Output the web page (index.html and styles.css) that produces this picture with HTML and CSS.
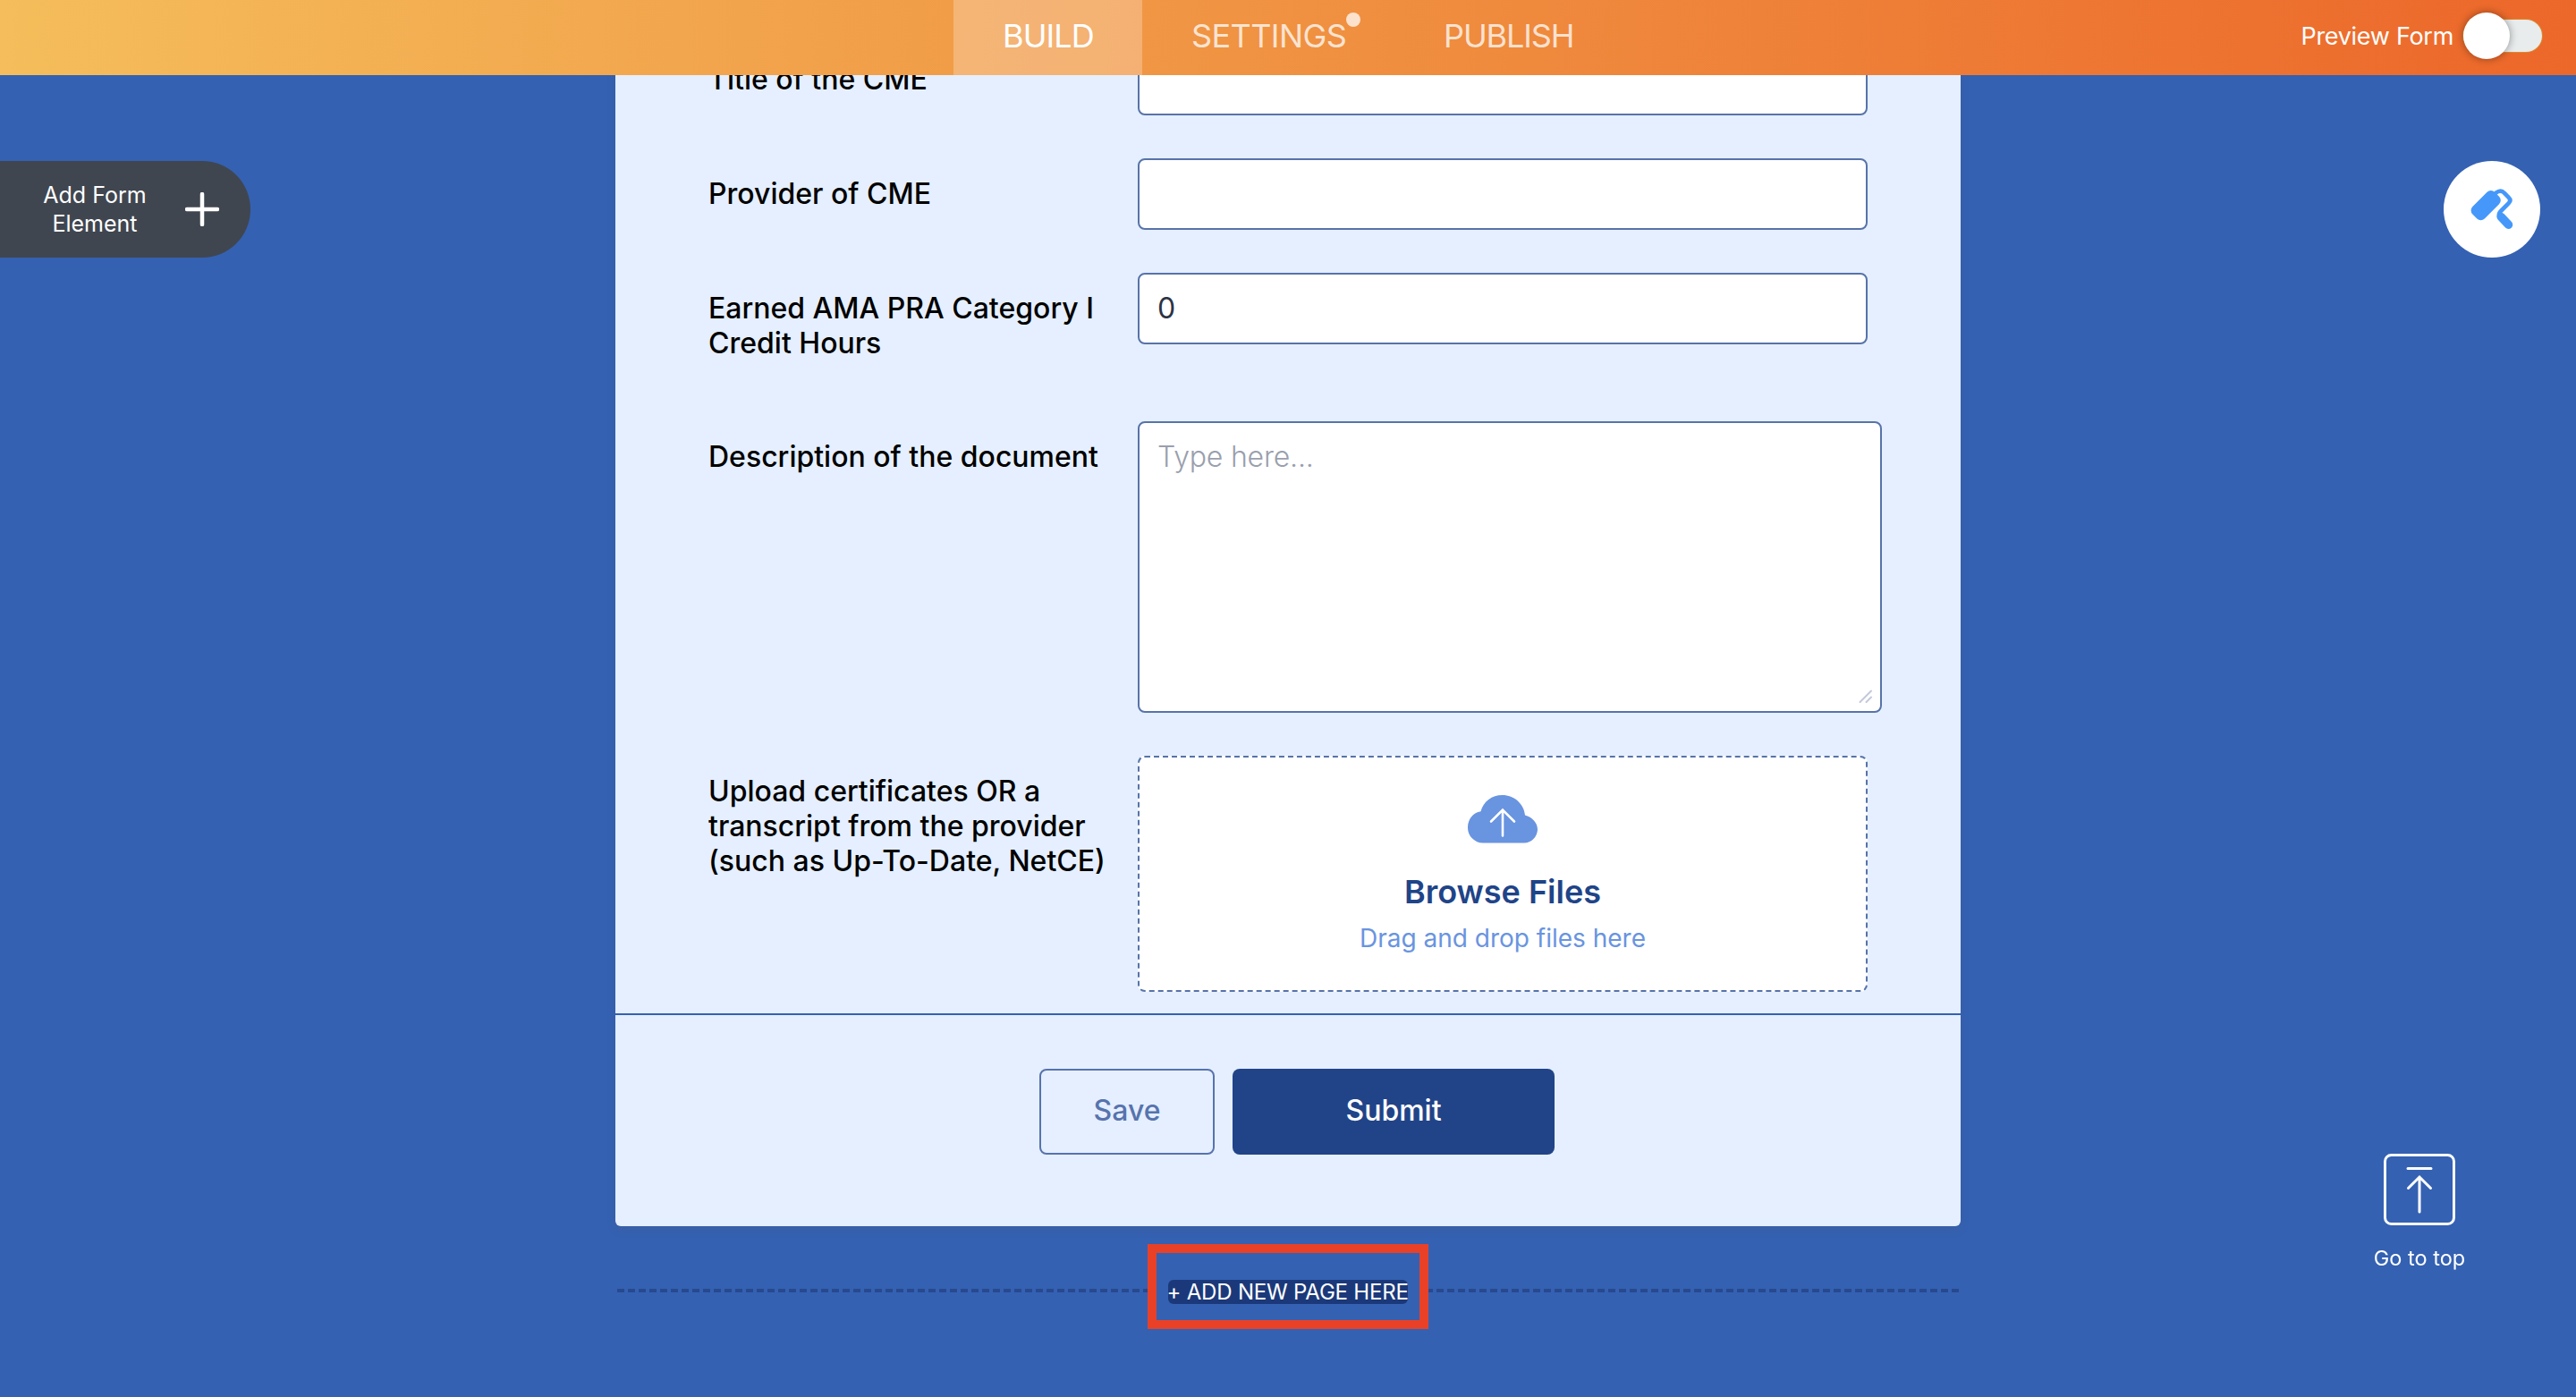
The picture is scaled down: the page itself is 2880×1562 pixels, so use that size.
FILE: index.html
```html
<!DOCTYPE html>
<html lang="en">
<head>
    <meta charset="UTF-8">
    <meta name="viewport" content="width=device-width, initial-scale=1.0">
    <title>Form Builder</title>
    <link rel="stylesheet" href="styles.css">
</head>
<body>
    <header class="topbar">
        <nav class="tabs">
            <a class="tab active"><span class="tab-text build">BUILD</span></a>
            <a class="tab"><span class="tab-text settings">SETTINGS<i class="dot"></i></span></a>
            <a class="tab"><span class="tab-text publish">PUBLISH</span></a>
        </nav>
        <div class="preview">
            <span class="preview-text">Preview Form</span>
            <span class="toggle"><span class="knob"></span></span>
        </div>
    </header>

    <button class="add-element">
        <span class="add-text">Add Form<br>Element</span>
        <svg class="plus" viewBox="0 0 38 38"><path d="M19 2v34M2 19h34"/></svg>
    </button>

    <button class="designer">
        <svg viewBox="0 0 108 108">
            <rect x="-17.5" y="-9.5" width="35" height="19" rx="6" transform="translate(47.2 49.6) rotate(-45)"/>
            <path class="arm" d="M58.5 35.6Q64 31.5 68 36L72.8 40.8Q76 44 72.8 47.2L64 56Q61.5 58.5 61.8 62"/>
            <path class="grip" d="M64.3 62.6L72.5 71.3"/>
        </svg>
    </button>

    <main class="builder">
        <form class="form-card">
            <div class="fields">
                <div class="row">
                    <label for="title">Title of the CME</label>
                    <input type="text" id="title">
                </div>
                <div class="row">
                    <label for="provider">Provider of CME</label>
                    <input type="text" id="provider">
                </div>
                <div class="row">
                    <label for="hours">Earned AMA PRA Category I Credit Hours</label>
                    <input type="text" id="hours" value="0">
                </div>
                <div class="row">
                    <label for="description">Description of the document</label>
                    <div class="textarea-wrap">
                        <textarea id="description" placeholder="Type here..."></textarea>
                        <svg class="grabber" viewBox="0 0 16 16"><path d="M1.5 14L14 1.5M8.5 14L14 8.5"/></svg>
                    </div>
                </div>
                <div class="row">
                    <label>Upload certificates OR a transcript from the provider (such as Up-To-Date, NetCE)</label>
                    <div class="upload">
                        <svg class="cloud" viewBox="0 0 78 54">
                            <path class="cloud-shape" d="M17 53.5A17 17 0 0 1 0 36C0 27 6 19.5 14.5 18.2C17.5 7 27 0 38.5 0C52 0 63 10 64 22.5C72 24.5 78 31 78 38.5A15.5 15.5 0 0 1 63 53.5Z"/>
                            <path class="cloud-arrow" d="M39 45.5V17M26 29.5L39 16.5L52 29.5"/>
                        </svg>
                        <span class="browse">Browse Files</span>
                        <span class="drag">Drag and drop files here</span>
                    </div>
                </div>
            </div>
            <div class="actions">
                <button type="button" class="btn save">Save</button>
                <button type="button" class="btn submit">Submit</button>
            </div>
        </form>

        <div class="new-page">
            <svg class="dashes" height="4"><line x1="0" y1="2" x2="100%" y2="2"/></svg>
            <div class="highlight"><span class="new-page-text">+ ADD NEW PAGE HERE</span></div>
            <svg class="dashes after" height="4"><line x1="0" y1="2" x2="100%" y2="2"/></svg>
        </div>
    </main>

    <a class="go-top">
        <svg viewBox="0 0 80 80">
            <rect x="1.5" y="1.5" width="77" height="77" rx="7"/>
            <path d="M27 16.5H53M40 65V26.5M27.5 38.5L40 26L52.5 38.5"/>
        </svg>
        <span>Go to top</span>
    </a>
</body>
</html>
```

FILE: styles.css
```css
* {
    box-sizing: border-box;
}
body {
    margin: 0;
    height: 1562px;
    overflow: hidden;
    background-color: #3461b2;
    font-family: Inter, "Liberation Sans", sans-serif;
}
button, input, textarea {
    font-family: inherit;
}
.topbar {
    position: fixed;
    top: 0;
    left: 0;
    right: 0;
    z-index: 10;
    height: 84px;
    display: flex;
    justify-content: space-between;
    padding: 0 38px 0 1066px;
    background: linear-gradient(90deg, #f5bd5b 0%, #f09543 46%, #ec672a 100%);
}
.tabs {
    display: flex;
}
.tab {
    display: flex;
    align-items: center;
    padding: 0 55px 5px;
    color: rgba(255, 255, 255, 0.75);
    font-size: 36px;
    line-height: 44px;
}
.tab.active {
    background-color: rgba(255, 255, 255, 0.25);
    color: #fff;
}
.tab-text {
    position: relative;
    white-space: nowrap;
}
.build {
    width: 101px;
    letter-spacing: -0.9px;
}
.settings {
    width: 172px;
    letter-spacing: -0.6px;
}
.publish {
    letter-spacing: -1.1px;
}
.dot {
    position: absolute;
    top: -4px;
    right: -17px;
    width: 16px;
    height: 16px;
    border-radius: 50%;
    background-color: #fce2cd;
}
.preview {
    display: flex;
    align-items: center;
    padding-bottom: 4px;
    gap: 11px;
    color: #fff;
    font-size: 27px;
    letter-spacing: -0.3px;
}
.toggle {
    position: relative;
    width: 88px;
    height: 36px;
    border-radius: 18px;
    background-color: #e8ecec;
    box-shadow: 0 0 0 1px #dc8a2e;
}
.knob {
    position: absolute;
    top: -8px;
    left: 0;
    width: 52px;
    height: 52px;
    border-radius: 50%;
    background-color: #fff;
    box-shadow: 0 0 10px rgba(0, 0, 0, 0.4);
}
.add-element {
    position: fixed;
    top: 180px;
    left: 0;
    width: 280px;
    height: 108px;
    display: flex;
    align-items: center;
    justify-content: space-between;
    padding: 0 35px 0 46px;
    border: none;
    border-radius: 0 54px 54px 0;
    background-color: #404650;
    color: #fff;
}
.add-text {
    width: 120px;
    font-size: 25px;
    line-height: 32px;
    white-space: nowrap;
}
.plus {
    width: 38px;
    height: 38px;
    fill: none;
    stroke: #fff;
    stroke-width: 4.5;
    stroke-linecap: round;
}
.designer {
    position: fixed;
    top: 180px;
    right: 40px;
    width: 108px;
    height: 108px;
    padding: 0;
    border: none;
    border-radius: 50%;
    background-color: #fff;
}
.designer svg {
    display: block;
    fill: #4598fa;
}
.designer path {
    fill: none;
    stroke: #4598fa;
    stroke-linecap: round;
}
.arm {
    stroke-width: 4.6;
}
.grip {
    stroke-width: 9.5;
}
.builder {
    width: 1504px;
    margin: 0 auto;
}
.form-card {
    height: 1371px;
    border-radius: 0 0 6px 6px;
    background-color: #e5efff;
    box-shadow: 0 4px 8px rgba(80, 90, 130, 0.3);
}
.fields {
    display: flex;
    flex-direction: column;
    gap: 48px;
    padding: 49px 88px 24px 104px;
    border-bottom: 2px solid #3461b2;
}
.row {
    display: flex;
    align-items: flex-start;
    gap: 24px;
}
.row label {
    width: 456px;
    padding: 20px 0;
    font-size: 32px;
    font-weight: 500;
    line-height: 39px;
    color: #000;
}
.row input {
    width: 816px;
    height: 80px;
    padding: 0 20px 1px;
    border: 2px solid #5773a9;
    border-radius: 8px;
    background-color: #fff;
    color: #2c3345;
    font-size: 32px;
    outline: none;
}
.textarea-wrap {
    position: relative;
    height: 326px;
}
.row textarea {
    display: block;
    width: 832px;
    height: 326px;
    padding: 18px 20px;
    border: 2px solid #5773a9;
    border-radius: 8px;
    color: #2c3345;
    font-size: 32px;
    line-height: 39px;
    resize: none;
    outline: none;
}
.row textarea::placeholder {
    color: #9a9fae;
    font-weight: 300;
    letter-spacing: -0.2px;
}
.grabber {
    position: absolute;
    right: 10px;
    bottom: 10px;
    width: 16px;
    height: 16px;
    fill: none;
    stroke: #c3c8da;
    stroke-width: 2;
    stroke-linecap: round;
}
.upload {
    width: 816px;
    height: 264px;
    display: flex;
    flex-direction: column;
    align-items: center;
    padding-top: 42px;
    border: 2px dashed #5773a9;
    border-radius: 8px;
    background-color: #fff;
}
.cloud {
    width: 78px;
    height: 54px;
}
.cloud-shape {
    fill: #6994e0;
}
.cloud-arrow {
    fill: none;
    stroke: #fff;
    stroke-width: 2.6;
    stroke-linecap: round;
}
.browse {
    margin-top: 32px;
    color: #1f4488;
    font-size: 36px;
    font-weight: 600;
    line-height: 44px;
}
.drag {
    margin-top: 13px;
    color: #6994e0;
    font-size: 28px;
    line-height: 34px;
}
.actions {
    display: flex;
    justify-content: center;
    gap: 20px;
    padding: 60px 0 0 20px;
}
.btn {
    height: 96px;
    padding: 0 0 3px;
    border-radius: 8px;
    font-size: 32px;
    font-weight: 500;
}
.save {
    width: 196px;
    border: 2px solid #5773ad;
    background-color: transparent;
    color: #5773ad;
}
.submit {
    width: 360px;
    border: none;
    background-color: #214488;
    color: #fff;
}
.new-page {
    display: flex;
    align-items: center;
    margin-top: 20px;
    padding: 0 2px;
}
.dashes {
    flex: 1;
    margin-top: 9px;
    width: 0;
}
.dashes line {
    stroke: #28498f;
    stroke-width: 4;
    stroke-dasharray: 8 4;
}
.dashes.after line {
    stroke-dashoffset: 3;
}
.highlight {
    width: 314px;
    height: 95px;
    display: flex;
    justify-content: center;
    border: 10px solid #e94127;
    padding-top: 30px;
}
.new-page-text {
    width: 268px;
    height: 27px;
    border-radius: 6px;
    background-color: #1b397a;
    color: #fff;
    font-size: 24px;
    line-height: 27px;
    letter-spacing: -0.2px;
    text-indent: -1.5px;
    white-space: nowrap;
}
.go-top {
    position: fixed;
    top: 1290px;
    right: 95px;
    width: 160px;
    display: flex;
    flex-direction: column;
    align-items: center;
    gap: 22px;
    color: #fff;
    font-size: 23.5px;
    line-height: 30px;
}
.go-top svg {
    width: 80px;
    height: 80px;
    fill: none;
    stroke: #fff;
    stroke-width: 3;
    stroke-linecap: round;
}
```
